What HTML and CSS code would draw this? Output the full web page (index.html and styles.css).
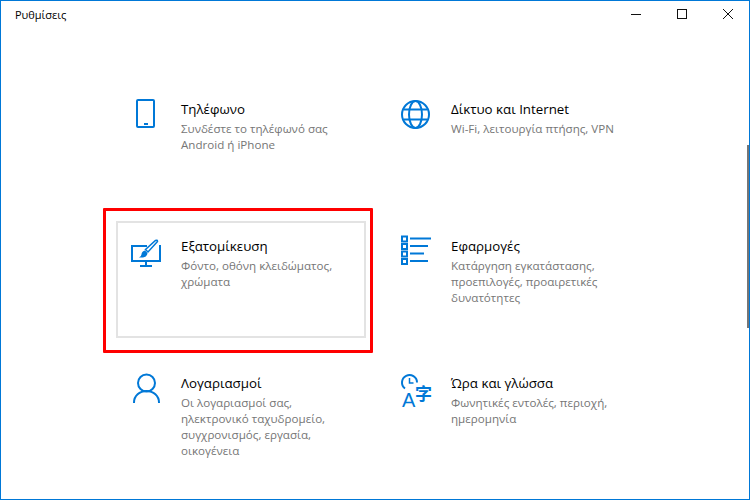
FILE: index.html
```html
<!DOCTYPE html>
<html lang="el">
<head>
    <meta charset="UTF-8">
    <title>Ρυθμίσεις</title>
    <link rel="stylesheet" href="styles.css">
</head>
<body>
    <div class="window">
        <div class="titlebar">
            <span class="app-title">Ρυθμίσεις</span>
            <div class="controls">
                <svg class="ctl" viewBox="0 0 46 32"><path d="M20 13.500H30"/></svg>
                <svg class="ctl" viewBox="0 0 46 32"><rect x="20.500" y="8.500" width="9" height="9"/></svg>
                <svg class="ctl" viewBox="0 0 46 32"><path d="M20 8L30 18M30 8L20 18"/></svg>
            </div>
        </div>

        <div class="grid">
            <div class="card">
                <svg class="icon" viewBox="0 0 30 30">
                    <rect class="line" x="6" y="1" width="17" height="27" rx="1"/>
                    <rect class="fill" x="13" y="24" width="4" height="2"/>
                </svg>
                <div class="text">
                    <div class="name">Τηλέφωνο</div>
                    <div class="desc">Συνδέστε το τηλέφωνό σας Android ή iPhone</div>
                </div>
            </div>
            <div class="card">
                <svg class="icon" viewBox="0 0 30 30">
                    <circle class="line" cx="14.500" cy="15.500" r="13.500"/>
                    <ellipse class="line" cx="14.500" cy="15.500" rx="6.500" ry="13.500"/>
                    <path class="line" d="M2.500 10.500H26.500M2.500 20.500H26.500"/>
                </svg>
                <div class="text">
                    <div class="name">Δίκτυο και Internet</div>
                    <div class="desc">Wi-Fi, λειτουργία πτήσης, VPN</div>
                </div>
            </div>

            <div class="card selected">
                <svg class="icon" viewBox="0 0 30 30">
                    <path class="line" d="M16 10H1V25H29V9"/>
                    <path class="line" d="M15 25V29M9 30H21"/>
                    <path class="thin" d="M26.500 5.500L17 16L14.500 13.500L24.500 4.500Q26.500 3.500 26.500 5.500Z"/>
                    <path class="fill" d="M14 14.500L16.500 17Q16 21 12 21.500L8 21.500Q10.500 20.500 10.500 18Q11 15 14 14.500Z"/>
                </svg>
                <div class="text">
                    <div class="name">Εξατομίκευση</div>
                    <div class="desc">Φόντο, οθόνη κλειδώματος, χρώματα</div>
                </div>
                <div class="marker"></div>
            </div>
            <div class="card">
                <svg class="icon" viewBox="0 0 30 30">
                    <path class="line" d="M9 2.500H30M9 10H27M9 17.500H23M9 25H27"/>
                    <path class="dots" d="M1 .5H6V5.500H1ZM1 8H6V13H1ZM1 15.500H6V20.500H1ZM1 23H6V28H1Z"/>
                </svg>
                <div class="text">
                    <div class="name">Εφαρμογές</div>
                    <div class="desc">Κατάργηση εγκατάστασης, προεπιλογές, προαιρετικές δυνατότητες</div>
                </div>
            </div>

            <div class="card">
                <svg class="icon" viewBox="0 0 30 30">
                    <circle class="line" cx="15.500" cy="10" r="8.500"/>
                    <path class="line" d="M3 30V29.500C3 23 8.500 18 15.500 18S28 23 28 29.500V30"/>
                </svg>
                <div class="text">
                    <div class="name">Λογαριασμοί</div>
                    <div class="desc">Οι λογαριασμοί σας, ηλεκτρονικό ταχυδρομείο, συγχρονισμός, εργασία, οικογένεια</div>
                </div>
            </div>
            <div class="card">
                <svg class="icon" viewBox="0 0 30 30">
                    <path class="line" d="M4 15.500A7.500 7.500 0 1 1 16 9.500"/>
                    <path class="thin" d="M8.500 5V10H12.500"/>
                    <text class="glyph-a" x="1" y="34">A</text>
                    <text class="glyph-cjk" x="14" y="26.500">字</text>
                </svg>
                <div class="text">
                    <div class="name">Ώρα και γλώσσα</div>
                    <div class="desc">Φωνητικές εντολές, περιοχή, ημερομηνία</div>
                </div>
            </div>
        </div>

        <div class="scroll-thumb"></div>
    </div>
</body>
</html>
```

FILE: styles.css
```css
html, body {
    margin: 0;
    height: 100%;
    background-color: #fff;
}
body {
    font-family: "Open Sans", "Noto Sans", sans-serif;
    overflow: hidden;
}
.window {
    position: relative;
    box-sizing: border-box;
    width: 750px;
    height: 500px;
    border: 1px solid #0078d7;
    overflow: hidden;
}
.titlebar {
    display: flex;
    justify-content: space-between;
    height: 32px;
}
.app-title {
    padding-left: 14px;
    font-size: 11px;
    line-height: 28px;
    color: #000;
}
.controls {
    display: flex;
}
.ctl {
    width: 46px;
    height: 32px;
    fill: none;
    stroke: #111;
    stroke-width: 1;
}
.grid {
    display: grid;
    grid-template-columns: 250px 250px;
    grid-auto-rows: 117px;
    gap: 20px;
    padding: 51px 0 0 115px;
}
.card {
    position: relative;
    display: flex;
    gap: 20px;
    box-sizing: border-box;
    padding: 13px;
    border: 2px solid transparent;
}
.card.selected {
    border-color: #e3e3e3;
}
.marker {
    position: absolute;
    left: -15px;
    right: -9px;
    top: -15px;
    bottom: -17px;
    border: 3px solid #f00;
    border-radius: 1px;
}
.icon {
    flex: none;
    width: 30px;
    height: 30px;
    overflow: visible;
}
.line {
    fill: none;
    stroke: #0078d7;
    stroke-width: 2;
}
.thin {
    fill: none;
    stroke: #0078d7;
    stroke-width: 1.5;
}
.fill {
    fill: #0078d7;
}
.dots {
    fill: #fff;
    stroke: #0078d7;
    stroke-width: 2;
}
.glyph-a {
    font-family: "Liberation Sans", sans-serif;
    font-size: 20px;
    fill: #0078d7;
}
.glyph-cjk {
    font-family: "Noto Sans CJK SC", sans-serif;
    font-size: 17px;
    font-weight: 700;
    fill: #0078d7;
}
.text {
    flex: 1;
    min-width: 0;
}
.name {
    font-size: 13.300px;
    line-height: 20px;
    margin-bottom: 2px;
    color: #000;
}
.desc {
    font-size: 11.600px;
    line-height: 16px;
    color: #767676;
}
.scroll-thumb {
    position: absolute;
    right: 0;
    top: 144px;
    width: 2px;
    height: 183px;
    background-color: #767676;
}
```
